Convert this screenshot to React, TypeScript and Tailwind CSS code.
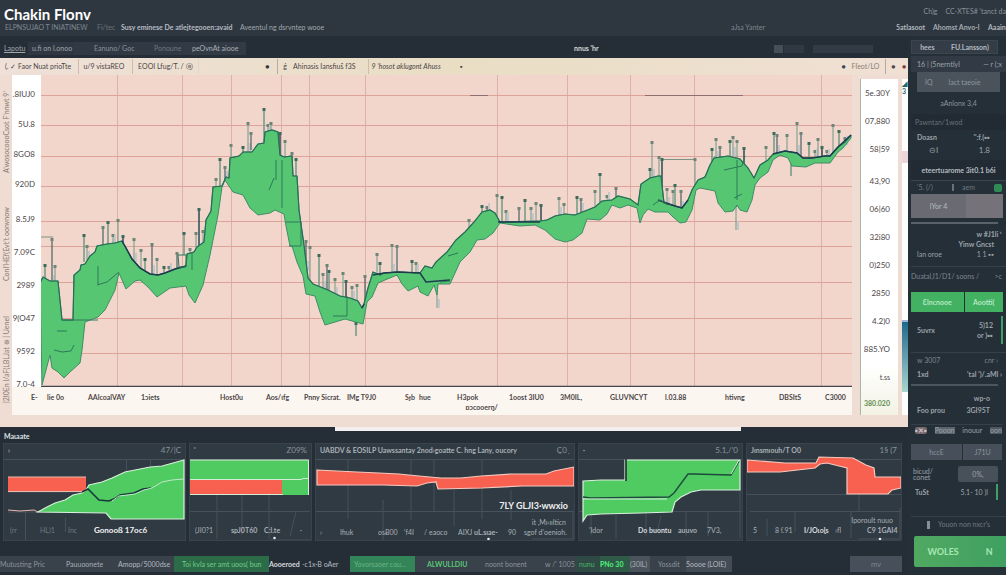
import { Fragment, ReactNode } from 'react';
import { clsx } from 'clsx';

interface Slot {
    at: number;
    w: number;
    text?: ReactNode;
    as?: 'a' | 'button' | 'span';
    className?: string;
}

// Row of items spread proportionally over the width, `from`..`to` is the scale
function Track({ items, from = 0, to, className }: { items: Slot[]; from?: number; to: number; className?: string }) {
    const last = items[items.length - 1];
    return (
        <div className={clsx('flex whitespace-nowrap', className)}>
            {items.map((item, i) => {
                const prev = i === 0 ? from : items[i - 1].at + items[i - 1].w;
                const Tag = item.as ?? 'span';
                return (
                    <Fragment key={i}>
                        <span className="min-w-0" style={{ flex: `${item.at - prev} 0 0px` }} />
                        <Tag
                            {...(Tag === 'a' ? { href: '#' } : {})}
                            className={clsx('flex min-w-0 items-center', item.className)}
                            style={{ flex: `${item.w} 0 0px` }}
                        >
                            {item.text}
                        </Tag>
                    </Fragment>
                );
            })}
            <span className="min-w-0" style={{ flex: `${to - last.at - last.w} 0 0px` }} />
        </div>
    );
}

const headerLinks: Slot[] = [
    { at: 5, w: 84, text: 'ELPNSUJAO T INIATINEW', className: 'text-[#7f8890]' },
    { at: 97, w: 14, text: 'Fi/tec', as: 'a', className: 'text-[#6b747d]' },
    { at: 121, w: 104, text: 'Susy eminese De atlejtegooen:avaid', as: 'a', className: 'font-bold text-[#b4bac0]' },
    { at: 240, w: 76, text: 'Aveentul ng dsrvntep wooe', as: 'a', className: 'text-[#a0a7ad]' },
    { at: 731, w: 30, text: 'aJsa Yanter', as: 'a', className: 'text-[#7d858d]' },
    { at: 896, w: 28, text: '5atlasoot', as: 'a', className: 'font-bold text-[#b4bac0]' },
    { at: 933, w: 40, text: 'Ahomst Anvo-l', as: 'a', className: 'font-bold text-[#a4abb1]' },
    { at: 988, w: 18, text: 'Aaain', as: 'a', className: 'font-bold text-[#b4bac0]' },
];

const navItems: Slot[] = [
    { at: 4, w: 18, text: 'Lapotu', as: 'a', className: 'text-[#a0a7ad] underline' },
    { at: 28, w: 46, text: 'u.fi on l.onoo', as: 'button', className: 'indent-1 bg-[#2f3842] text-[#a0a7ad]' },
    { at: 74, w: 68, text: 'Eanuno/ Goc', as: 'button', className: 'indent-5 bg-[#303944] text-[#8b939b]' },
    { at: 142, w: 42, text: 'Ponoune', as: 'button', className: 'indent-3 bg-[#303944] text-[#6f7880]' },
    { at: 184, w: 62, text: 'peOvnAt aiooe', as: 'button', className: 'indent-2 bg-[#323b45] text-[#a8afb5]' },
    { at: 574, w: 20, text: "nnus 'hr", className: 'font-bold text-[#d5d9dc]' },
    { at: 774, w: 9, className: 'h-2 self-center bg-[#464f59]' },
    { at: 784, w: 20, className: 'h-2 self-center bg-[#303943]' },
    { at: 813, w: 60, className: 'h-2 self-center bg-[#323b45]' },
];

const toolItems: Slot[] = [
    { at: 5, w: 74, text: '(. ✓ Faor Nuat prioTte', as: 'button', className: 'border-r border-[#cdbcae]' },
    { at: 83, w: 49, text: 'u/9 vistaREO', as: 'button', className: 'border-r border-[#cdbcae]' },
    { at: 137, w: 60, text: 'EOOI Lfug/T. /  ⓔ', as: 'button', className: 'border-r border-[#e3d6c8]' },
    { at: 264, w: 12, text: '●', className: 'border-r border-[#b9aaa0] text-[#33343b]' },
    { at: 281, w: 8, text: 'ǵ' },
    { at: 291, w: 75, text: 'Ahinasis Iansfiuš f3S', as: 'button', className: 'border-r border-[#cdbcae]' },
    { at: 369, w: 68, text: '9 ’hosot aklugont Ahuss', as: 'button', className: 'italic' },
    { at: 458, w: 5, text: '▪' },
    { at: 842, w: 5, text: '●', className: 'text-[#33445a]' },
    { at: 852, w: 34, text: 'Fſeot/LO', as: 'button', className: 'border-r border-[#b9aaa0] text-[#8a7f78]' },
    { at: 891, w: 6, text: '●' },
    { at: 902, w: 5, text: '●', className: 'text-[#7a3b46]' },
];

const leftAxisTop = ['.8IUJ0', '5U.8', '8GO8', '920D'];
const leftAxisBottom = ['8.5J9', '7.09C', '2989', '9(O47', '9592', '7.0-4'];
const priceTop = ['5e.30Y', '07,880', '58|59'];
const priceBottom = ['43,90', '06|60', '32i80', '0)250', '2850', '4.2)0', '885.YO'];

const timeAxis: Slot[] = [
    { at: 31, w: 12, text: 'E-' },
    { at: 47, w: 17, text: 'lie 0o' },
    { at: 88, w: 38, text: 'AAlcoalVAY' },
    { at: 141, w: 18, text: '1ɔiets' },
    { at: 220, w: 19, text: 'Host0u' },
    { at: 266, w: 20, text: 'Aos/ıfg' },
    { at: 304, w: 34, text: 'Pnny Sicrat.' },
    { at: 347, w: 32, text: 'IMg T9J0' },
    { at: 405, w: 12, text: 'Sɟb' },
    { at: 419, w: 12, text: 'hue' },
    { at: 457, w: 18, text: 'H3pok' },
    { at: 509, w: 32, text: '1oost 3IU0' },
    { at: 560, w: 18, text: '3M0IL,' },
    { at: 610, w: 32, text: 'GLUVNCYT' },
    { at: 665, w: 20, text: 'l.03.88' },
    { at: 725, w: 18, text: 'htivng' },
    { at: 779, w: 20, text: 'DBSItS' },
    { at: 825, w: 18, text: 'C3000' },
];

const statusItems: Slot[] = [
    { at: 0, w: 54, text: 'Mutusting Pric', as: 'button', className: 'bg-[#39414b] text-[#8b939b]' },
    { at: 54, w: 56, text: 'Pauuoonete', as: 'button', className: 'indent-3 bg-[#39414b] text-[#a8afb5]' },
    { at: 110, w: 64, text: 'Amopp/5000dse', as: 'button', className: 'indent-2 bg-[#39414b] text-[#b4bac0]' },
    { at: 174, w: 95, text: 'Toi kvla ser amt uoos( bun', as: 'button', className: 'indent-2 bg-[#2c6b48] text-[#6fce85]' },
    { at: 269, w: 28, text: 'Aooeroed', as: 'button', className: 'font-bold text-[#d5d9dc]' },
    { at: 302, w: 48, text: '-c1x·B oAer', as: 'button', className: 'text-[#b4bac0]' },
    { at: 350, w: 65, text: 'Yovorsaoer cou...', as: 'button', className: 'indent-1 bg-[#34845a] text-[#6bb583]' },
    { at: 415, w: 62, text: 'ALWULLDIU', as: 'button', className: 'indent-3 bg-[#39414b] font-bold text-[#57c777]' },
    { at: 477, w: 60, text: 'noont bonent', as: 'button', className: 'indent-2 bg-[#39414b] text-[#8b939b]' },
    { at: 537, w: 38, text: "w /' 1005", as: 'button', className: 'indent-2 bg-[#39414b] text-[#8b939b]' },
    { at: 575, w: 25, text: 'nunu', as: 'button', className: 'indent-1 bg-[#2f4a44] text-[#4cb56c]' },
    { at: 600, w: 30, text: 'PNo 30', as: 'button', className: 'bg-[#2f5a48] font-bold text-[#4ff07c]' },
    { at: 630, w: 20, text: '(30lL)', as: 'button', className: 'bg-[#4a525b] text-[#a8afb5]' },
    { at: 650, w: 36, text: 'Yossdit', as: 'button', className: 'indent-2 bg-[#39414b] text-[#8b939b]' },
    { at: 686, w: 46, text: '5oooe (LOIE)', as: 'button', className: 'bg-[#434b55] text-[#b4bac0]' },
    { at: 850, w: 52, text: 'rnv', as: 'button', className: 'justify-center bg-[#47505a] text-[#7f8890]' },
];

// [x, top, bottom] of the thin wicks around the band
const wicks = [
    [45, 264, 284], [52, 238, 284], [55, 265, 283], [84, 234, 262], [87, 245, 260], [103, 226, 248], [108, 221, 246],
    [113, 234, 244], [118, 219, 243], [123, 235, 243], [134, 238, 262], [141, 249, 268], [145, 258, 272], [152, 243, 274],
    [157, 258, 275], [164, 266, 274], [169, 266, 272], [177, 252, 269], [184, 232, 255], [190, 248, 270], [196, 232, 252],
    [199, 208, 248], [203, 230, 244], [216, 178, 188], [220, 158, 186], [225, 166, 180], [231, 144, 160], [243, 146, 153],
    [248, 122, 152], [251, 132, 150], [264, 108, 142], [268, 124, 132], [271, 122, 132], [280, 132, 157], [285, 140, 200],
    [292, 152, 160], [296, 158, 178], [306, 240, 270], [310, 246, 284], [319, 254, 290], [323, 273, 290], [327, 264, 292],
    [329, 270, 292], [335, 278, 296], [343, 272, 298], [346, 280, 298], [352, 286, 300], [357, 284, 302], [356, 322, 336],
    [365, 275, 300], [377, 253, 276], [380, 262, 278], [392, 244, 273], [397, 245, 276], [412, 260, 273], [416, 262, 273],
    [427, 268, 282], [431, 268, 284], [437, 262, 308], [469, 219, 230], [482, 205, 214], [487, 206, 212], [497, 194, 222],
    [502, 196, 221], [506, 210, 221], [519, 207, 221], [525, 199, 221], [531, 207, 222], [536, 202, 221], [541, 204, 221],
    [559, 197, 216], [564, 203, 214], [577, 196, 214], [581, 198, 212], [595, 190, 206], [600, 173, 202], [607, 195, 201],
    [616, 187, 200], [650, 168, 180], [652, 141, 178], [659, 156, 177], [662, 158, 200], [667, 188, 206], [673, 190, 206],
    [675, 184, 206], [681, 190, 210], [695, 158, 186], [712, 148, 165], [716, 138, 160], [720, 146, 158], [730, 140, 158],
    [733, 136, 156], [737, 140, 160], [744, 147, 166], [736, 204, 230], [766, 146, 164], [774, 132, 158], [777, 134, 154],
    [787, 134, 152], [791, 158, 176], [797, 122, 154], [801, 132, 156], [809, 142, 158], [815, 150, 158], [818, 138, 158],
    [822, 146, 158], [827, 150, 158], [833, 124, 154], [839, 130, 150], [845, 137, 145],
];

const upper =
    '40,283 43,277 50,281 58,281 61,310 62,320 73,320 74,275 80,270 81,265 85,264 90,256 95,252 97,246 107,244 115,243 122,241 126,248 132,259 140,268 150,274 158,275 165,273 175,269 186,266 187,254 194,252 197,247 204,242 206,220 211,211 213,187 222,186 226,177 229,178 230,158 239,156 243,152 252,152 258,144 264,143 265,132 272,130 278,132 280,155 284,157 292,156 293,176 297,176 299,210 304,245 308,278 313,284 318,286 328,290 340,296 350,298 358,301 362,308 364,304 368,288 373,272 380,275 384,273 398,272 420,273 425,266 432,268 436,262 447,252 456,240 465,232 474,222 482,212 490,210 495,213 500,222 540,221 547,220 555,216 565,214 575,215 585,211 595,207 602,201 612,200 618,196 630,199 638,205 641,184 650,178 658,176 661,176 664,203 675,206 682,208 688,200 692,190 698,180 705,177 710,165 714,158 728,156 740,159 748,168 754,178 760,165 768,160 773,154 785,151 797,153 803,158 812,158 825,156 830,156 838,147 845,142 851,135';
const lower =
    '851,138 843,148 838,152 830,163 815,163 806,167 792,166 788,158 780,155 773,160 768,172 760,178 755,185 752,200 747,212 740,210 737,205 733,211 725,212 718,203 715,191 700,188 696,190 692,210 686,222 680,223 673,217 668,212 655,212 648,209 643,215 640,223 637,208 628,205 620,208 612,205 607,214 600,220 587,219 582,233 573,240 565,242 555,239 545,230 535,225 520,226 500,223 493,233 485,239 477,240 470,252 460,262 450,284 438,284 437,295 434,285 428,296 420,292 418,286 408,291 402,284 397,275 385,280 378,283 372,297 367,302 363,324 345,319 325,325 320,312 315,296 306,294 303,276 297,262 292,246 290,246 286,226 284,214 275,210 270,213 258,215 250,208 243,195 233,192 225,180 222,187 218,215 210,255 203,285 195,303 189,295 186,286 170,288 157,297 148,287 140,280 135,281 126,289 119,273 115,290 105,310 98,317 85,322 82,350 80,363 70,372 64,378 58,372 52,368 50,355 46,370 42,385';

function FlowChart() {
    return (
        <svg viewBox="41 75 811 312" preserveAspectRatio="none" className="block h-[312px] w-full bg-[#f2d5cb]" role="img" aria-label="Flow chart">
            {[117, 182, 231, 281, 309, 365, 497, 567, 630, 694, 821].map((x) => (
                <path key={x} d={`M${x}.5 75V387`} stroke="#dcb1a8" fill="none" />
            ))}
            {[95, 125, 156, 186, 221, 246, 282, 318, 353].map((y) => (
                <path key={y} d={`M41 ${y}.5H852`} stroke="#dda39b" fill="none" />
            ))}
            <path d="M470 95.5h18M645 95.5h98" stroke="#8d6f70" fill="none" />
            <path d="M663 159.5h33M41 237h12" stroke="#7d9484" fill="none" />
            {wicks.map(([x, top, bottom], i) => (
                <g key={i}>
                    <path d={`M${x} ${top}V${bottom}`} stroke={i % 4 === 1 ? '#2b4a55' : '#6f9a86'} strokeWidth={i % 3 === 0 ? 1.5 : 1} />
                    <rect x={x - 1.5} y={top} width="3" height="3" fill={i % 3 === 0 ? '#3c6b5a' : '#6d8577'} />
                    {i % 3 === 1 && <rect x={x + 1} y={bottom - 9} width="2" height="9" fill="#c3c6cb" />}
                </g>
            ))}
            <polygon points={`${upper} ${lower}`} fill="#57c673" stroke="#3c8f66" strokeLinejoin="round" />
            <polyline points={upper} fill="none" stroke="#276e58" strokeWidth="1.2" />
            <path d="M122 241l4 7 6 11 8 9 10 6 8 1 7-2 10-4 11-3M373 275l11-2 14-1 22 1 6 9 24-2M498 222h42M658 200l17 6 7 2 6-8M362 308l2-4M773 154l12-3 12 2 6 5 9 0 13-2 5 0 8-9 13-12" fill="none" stroke="#1d3d4f" strokeWidth="1.5" />
            <path d="M62 320H98M54 350l8 2 9-1 3-6M57 331h10M97 285l10-3 12-10M98 266v18M178 255h8v12h-7zM192 252v18M274 178l-5 12M282 160v48M276 160v20M286 222h15v24h-12M333 316h14v-20M724 170l18-4 3-10M737 160v40M734 198l8-4M653 205l7-5 8 5M448 256l10-3M440 282l10-1" fill="none" stroke="#2b7a58" />
            <path d="M41 386.5H852" stroke="#45454f" strokeWidth="1.5" />
        </svg>
    );
}

function Card({ view, title, value, art, children }: { view: string; title?: string; value: string; art: ReactNode; children: ReactNode }) {
    return (
        <article className="grid min-w-0 border border-[#38434d] bg-[#303a43]">
            <svg viewBox={view} preserveAspectRatio="none" className="h-24 w-full [grid-area:1/1]" aria-hidden="true">
                {art}
            </svg>
            <div className="flex min-w-0 flex-col justify-between whitespace-nowrap [grid-area:1/1]">
                <header className="flex justify-between px-1 leading-3">
                    <h3 className="font-bold text-[#a9b0b6]">{title}</h3>
                    <span className="text-[8px] text-[#8b949c]">{value}</span>
                </header>
                {children}
            </div>
        </article>
    );
}

const cardGrid = { stroke: '#46515b', fill: 'none' };

function MiniCharts() {
    return (
        <div className="grid grid-cols-[183fr_123fr_260fr_165fr_156fr] gap-[3px] pr-1.5 pl-[3px] text-[7px] text-[#a9b0b6]">
            <Card
                view="4 444 181 96"
                title="›"
                value="47/|C"
                art={
                    <>
                        <path d="M4 459.5H184M8 492H184M8 512H110M25.500 512v28M65.500 518v14M126.500 459v60M150.500 459v60" {...cardGrid} />
                        <rect x="8" y="477" width="78" height="15" fill="#f8614f" />
                        <path d="M8 477h78M8 491.500h74M8 510l12 1 14-1 4 2" fill="none" stroke="#ebb9ad" />
                        <path d="M38 512L47 507 55 503 65 500 73 495 82 493 86 490 89 485 102 482 112 478 125 472 140 469 150 467 162 466 173 463 184 460V519H111L106 513Z" fill="#50cb62" stroke="#d8f0dc" strokeWidth="1.2" />
                        <path d="M82 492l6-3 6 6 5 5 10 1 7-3 4-3 14-2 9-4 8-1" fill="none" stroke="#15383c" strokeWidth="1.6" />
                        <path d="M112 501l7-5 16-2 9-4 8-2 10-6 10-2 12-1" fill="none" stroke="#bfe8c6" />
                    </>
                }
            >
                <Track
                    className="h-5 text-[#6f7982]"
                    from={4}
                    to={185}
                    items={[
                        { at: 10, w: 14, text: '(rr' },
                        { at: 40, w: 14, text: 'HL)1' },
                        { at: 68, w: 14, text: 'Inc' },
                        { at: 94, w: 50, text: 'Gonooß 17oc6', className: 'text-[8px] font-bold text-[#f0f2f3]' },
                    ]}
                />
            </Card>
            <Card
                view="190 444 121 96"
                title="'"
                value="Z09%"
                art={
                    <>
                        <path d="M190 459.500H310M190 511.500H310M217 495v44M242 495v40M269 495v44M296 512l-6 24M270 540h40" {...cardGrid} />
                        <rect x="189" y="460" width="120" height="35" fill="#50cb62" />
                        <rect x="189" y="480" width="93" height="15" fill="#f8614f" />
                        <path d="M189 460h119.500v35M189 479.500h112l2-1h6M189 494.500h94" fill="none" stroke="#d3ecd5" />
                        <circle cx="274.500" cy="538" r="1.300" fill="#e8eaec" />
                    </>
                }
            >
                <Track
                    className="h-5"
                    from={190}
                    to={311}
                    items={[
                        { at: 195, w: 16, text: '(JI0?1' },
                        { at: 231, w: 20, text: 'spJ0T60', className: 'font-bold' },
                        { at: 264, w: 14, text: 'C:l.te', className: 'font-bold' },
                        { at: 300, w: 4, text: '·' },
                    ]}
                />
            </Card>
            <Card
                view="314 444 258 96"
                title="UABDV & EOSILP Uawssantay 2nod›goatte C. hng Lany, oucory"
                value="Ç0ˎ"
                art={
                    <>
                        <path d="M314 459.500H572M314 511.500H572M346 459v60M381 500v40M409 460v60M432 459v52M452 490v36M480 459v60M509 490v30M571 512v27H530" {...cardGrid} />
                        <path d="M315 470l20 1 20 1 22 1 20 1 20 2 22 2 20 0 20-2 30-2 20 0 15 0 8-3 20-4v19H520L480 488 436 489 434 482 425 483 415 486 381 485 315 485Z" fill="#f8614f" stroke="#f3c9bf" strokeWidth="1.2" />
                        <path d="M432 476h26" fill="none" stroke="#2b3038" strokeDasharray="4 2" />
                        <circle cx="486.500" cy="539" r="1.300" fill="#e8eaec" />
                    </>
                }
            >
                <div className="flex flex-col">
                    <p className="self-end pr-1.5 pb-1 text-[9px] leading-3 font-bold text-[#eef0f1]">7LY GLJI3·wwxio</p>
                    <p className="self-end pr-2 leading-3">it ,Mı‹ıılticn</p>
                    <Track
                        className="h-3 pb-1"
                        from={314}
                        to={572}
                        items={[
                            { at: 318, w: 6, text: '›' },
                            { at: 338, w: 14, text: 'Ifıuk' },
                            { at: 376, w: 16, text: 'osɃ00' },
                            { at: 402, w: 10, text: "'f4I" },
                            { at: 422, w: 20, text: '/ eaoco' },
                            { at: 456, w: 12, text: 'AIXJ' },
                            { at: 472, w: 20, text: 'uL.sıae-', className: 'font-bold' },
                            { at: 506, w: 8, text: '90' },
                            { at: 522, w: 40, text: 'sgof dʼoenioh.' },
                        ]}
                    />
                </div>
            </Card>
            <Card
                view="578 444 163 96"
                title="·"
                value="5.1,/'0"
                art={
                    <>
                        <path d="M578 459.500H742M578 511.500H742M590 515v20M615 515v24M645 512v24M660 516l-4 16M685 512v24M707 512v24M739 460v78" {...cardGrid} />
                        <path d="M582 481L600 480H624V460H739V490H700L690 492 680 497 674 502 671 512 640 513 600 514 586 515 582 521Z" fill="#50cb62" stroke="#d8f0dc" strokeWidth="1.200" />
                        <path d="M582 497l8 1 78-1 5-4 14-19 5-0 38 1 8-14" fill="none" stroke="#1d4a3c" strokeWidth="1.400" />
                        <path d="M582 499h84M730 474l8-14" fill="none" stroke="#d8f0dc" />
                        <path d="M625 459v22" stroke="#1b232b" strokeWidth="1.500" />
                    </>
                }
            >
                <Track
                    className="h-5"
                    from={578}
                    to={741}
                    items={[
                        { at: 588, w: 14, text: "'Idor" },
                        { at: 637, w: 34, text: 'Do buontu', className: 'font-bold text-[#d5d9dc]' },
                        { at: 677, w: 18, text: 'auuvo', className: 'font-bold' },
                        { at: 706, w: 12, text: '7V3,' },
                    ]}
                />
            </Card>
            <Card
                view="747 444 154 96"
                title="Jınsmıouh/T O0"
                value="1§ (7"
                art={
                    <>
                        <path d="M747 459.500H901M747 494.500H901M750 511.500H901M767 519v17M795 512v20M851 511v27M859 495v16M900 508v31H859" {...cardGrid} />
                        <path d="M747 460L760 461 785 463 816 463 819 457 853 458 866 465 874 468 875 477 901 477V488L892 490 888 494H847V468L835 465 827 463 820 464 815 468 780 472 747 472Z" fill="#f8614f" stroke="#f3c9bf" strokeWidth="1.200" />
                        <circle cx="880" cy="539" r="1.300" fill="#e8eaec" />
                    </>
                }
            >
                <div>
                    <p className="pr-2 text-right leading-2">Iporoult nuuo</p>
                    <Track
                        className="h-4 pb-1"
                        from={747}
                        to={901}
                        items={[
                            { at: 753, w: 6, text: '5' },
                            { at: 775, w: 14, text: '8 ſ.91' },
                            { at: 804, w: 20, text: 'I/JOɩoɭs', className: 'font-bold text-[#d5d9dc]' },
                            { at: 835, w: 10, text: '›fl' },
                            { at: 867, w: 24, text: 'C9 1GAI4', className: 'font-bold' },
                        ]}
                    />
                </div>
            </Card>
        </div>
    );
}

function Row({ left, right, className }: { left?: ReactNode; right?: ReactNode; className?: string }) {
    return (
        <div className={clsx('flex items-center justify-between whitespace-nowrap pr-4 pl-1.5', className)}>
            <span>{left}</span>
            <span>{right}</span>
        </div>
    );
}

function Sidebar() {
    return (
        <aside className="flex w-[98px] shrink-0 flex-col overflow-hidden bg-[#252f38] pl-[3px] text-[7px] leading-none text-[#9ba2a9]">
            <div className="mt-1 mr-2 flex h-3.5 justify-around border border-[#3b454e] bg-[#343d47] font-bold whitespace-nowrap text-[#b4bac0]">
                <button>hees</button>
                <button>FU.Lansson)</button>
            </div>
            <Row left="16 | (5nerntlyl" right="— r (;x" className="mt-0.5 h-4 bg-[#323b45] pr-1!" />
            <button className="mr-1.5 ml-1.5 flex h-5 items-center gap-4 bg-[#4a525b] pl-2 text-[#8f979e]">
                <span>IQ</span>
                <span>lact taeoie</span>
            </button>
            <p className="flex h-[22px] items-center justify-center text-[#8b939b]">aAnlonx 3,4</p>
            <h2 className="flex h-4 items-center bg-[#222b34] pl-1 text-[#66707a]">Pawntan/1wod</h2>
            <Row left="Doasn" right="'':f.(▪▪" className="h-3.5 font-bold" />
            <Row left={<span className="pl-3">⊝I</span>} right="1.8" className="h-3 text-[8px]" />
            <h2 className="mt-1 flex h-5 items-center justify-center bg-[#222b34] font-bold whitespace-nowrap text-[#b4bac0]">
                eteertuarome 3it0.1 b6i
            </h2>
            <div className="flex h-3.5 items-center justify-between border-t border-[#3b454e] pr-1 pl-1.5 text-[#6f7982]">
                <span>'5. (/)</span>
                <span className="border-l-2 border-[#68717a] pl-2">aem</span>
                <span className="size-2 rounded-xs bg-[#2f8a55]" />
            </div>
            <button className="mr-[3px] grid h-6 grid-cols-[3fr_2fr] bg-[#6a6b72] text-[#b9bcc0]">
                <span className="self-center">lYor 4</span>
                <span className="h-full bg-[#75727a]" />
            </button>
            <hr className="mt-1 mr-2 border-t-2 border-[#59626b]" />
            <Row right="w #J1li  ‵" className="mt-1 h-3 font-bold pr-1!" />
            <Row right="Yinw Gncst" className="h-2 font-bold pr-3!" />
            <Row left="lan oroe" right="1 1 ▪▪" className="h-3 pr-3!" />
            <h2 className="mt-1.5 flex h-5 items-center justify-between border-t border-[#36404a] pr-1 whitespace-nowrap text-[#7d868e]">
                Duatal,I1/D1/ soons / <span>&gt;c</span>
            </h2>
            <div className="mt-1.5 mr-[3px] grid h-5 grid-cols-[52fr_38fr] gap-px font-bold text-[#b5e8c2]">
                <button className="bg-[#42b162]">Ɛlncnooe</button>
                <button className="bg-[#42b162]">Aootti(</button>
            </div>
            <div className="mt-1 mr-[3px] flex h-7 items-center justify-between border-r-2 border-[#3f9f67] pr-2 pl-1.5 font-bold">
                <span>5uvrx</span>
                <span className="text-right leading-[10px]">
                    5)12
                    <br />
                    or )▪▪
                </span>
            </div>
            <Row left="w 3007" right="cnr  ›" className="mt-2 h-4 border-t border-[#36404a] text-[#7d868e] pr-2!" />
            <Row left="1xd" right="'tal ')/.aMl ›" className="h-3 font-bold pr-1!" />
            <hr className="mt-1 mr-2 border-t-2 border-[#4c555e]" />
            <Row right="wp-o" className="mt-1.5 h-3 font-bold" />
            <Row left="Foo prou" right="3GI95T" className="h-3 font-bold" />
            <div className="mt-2 mr-1 flex h-3 items-center justify-between gap-0.5 border-t border-[#36404a] pl-1 whitespace-nowrap">
                <span className="rounded-xs bg-[#75686c] font-bold text-[#cbbfc1]">▪✕▪</span>
                <span className="bg-[#5a636c]">Pooon</span>
                <span>inouur</span>
                <span className="bg-[#4f5861]">oon</span>
            </div>
            <div className="mt-2 mr-1 grid h-4 grid-cols-[50fr_38fr] gap-px text-[#8b939b]">
                <button className="bg-[#47505a]">hccE</button>
                <button className="bg-[#47505a]">J71U</button>
            </div>
            <div className="mt-1 mr-2 flex h-5 items-center justify-between pl-0.5">
                <span className="leading-[6px]">
                    bicud/
                    <br />
                    conet
                </span>
                <button className="h-4 w-10 rounded-xs bg-[#48515a]">0%,</button>
            </div>
            <div className="mr-2 flex h-4 items-center justify-between border-r-2 border-[#3f9f67] pr-2 pl-1 font-bold">
                <span>TuSt</span>
                <span className="font-normal">5.1- 10 )l</span>
            </div>
            <p className="mt-4 flex h-4 items-center justify-center gap-2 border-t border-[#36404a] whitespace-nowrap text-[#6f7982]">
                <span className="h-2 w-[3px] bg-[#87909a]" />
                Youon non nxcr's
            </p>
            <button className="mt-1 ml-[3px] flex h-[31px] items-center justify-around rounded-l-xs bg-linear-to-r from-[#50a961] to-[#3fa061] text-[9px] font-bold text-[#a7e8b4]">
                <span>WOLES</span>
                <span>N</span>
            </button>
        </aside>
    );
}

export default function App() {
    return (
        <div className="flex min-h-screen flex-col overflow-hidden bg-[#252e37] font-[Lato,'Open_Sans',sans-serif] text-[7px]">
            <header className="bg-[#2e3740]">
                <div className="flex h-[22px] items-end justify-between pl-1">
                    <h1 className="text-[15px] leading-4 font-bold text-white">Chakin Flonv</h1>
                    <div className="flex gap-2 self-center whitespace-nowrap text-[#8b939b]">
                        <span>Ch)g</span>
                        <span>CC-XTES# ‘tanct da</span>
                    </div>
                </div>
                <Track className="h-3.5 items-start leading-[10px]" items={headerLinks} to={1006} />
            </header>

            <div className="flex flex-1">
                <main className="flex min-w-0 flex-1 flex-col">
                    <Track className="h-[22px] pt-1.5 pb-[3px]" items={navItems} to={908} />

                    <section className="bg-[#efdcd3] pb-3 text-[#4c4647]">
                        <Track className="h-[17px] bg-linear-to-r from-[#efe0d8] via-[#e9dec4] to-[#f0e0d4] py-px" items={toolItems} to={908} />
                        <div className="flex">
                            <div className="flex w-3 shrink-0 rotate-180 flex-row-reverse items-center justify-between pt-3 pb-4 leading-3 whitespace-nowrap text-[#857b76] [writing-mode:vertical-rl]">
                                <span>A’wosocoooCsot F’nnwt 9’</span>
                                <span>Conl’HEf(Evt’t oonvnow</span>
                                <span>|2I0En l/aF(LBLJat ⊕ | Uenel</span>
                            </div>
                            <div className="grid min-w-0 flex-1 grid-cols-[29px_1fr] grid-rows-[312px_28px]">
                                <div className="flex flex-col bg-white pt-1 pr-1.5 text-right text-[8px]">
                                    {leftAxisTop.map((label) => (
                                        <span key={label} className="h-[30px] leading-[30px]">{label}</span>
                                    ))}
                                    <div className="flex flex-col pt-1">
                                        {leftAxisBottom.map((label) => (
                                            <span key={label} className="h-[33px] leading-[33px]">{label}</span>
                                        ))}
                                    </div>
                                </div>
                                <FlowChart />
                                <div className="col-span-2 bg-[#fcf6f1] pt-1 font-bold">
                                    <Track className="h-3" from={12} to={852} items={timeAxis} />
                                    <p className="pl-[54%] leading-2">ɒɔcooerŋ/</p>
                                </div>
                            </div>
                            <div className="mt-1 mr-1 ml-2 flex w-[38px] shrink-0 flex-col border-l border-[#a9b5a8] bg-linear-to-b from-white from-85% to-[#f3f2e4] pr-2 text-right text-[8px]">
                                {priceTop.map((label) => (
                                    <span key={label} className="h-7 leading-7">{label}</span>
                                ))}
                                <div className="flex flex-col pt-1">
                                    {priceBottom.map((label) => (
                                        <span key={label} className="h-7 leading-7">{label}</span>
                                    ))}
                                    <span className="h-7 text-[7px] leading-7">t.ss</span>
                                    <span className="h-6 text-[7px] leading-6 font-bold text-[#5f8f52]">380.020</span>
                                </div>
                            </div>
                            <div className="mt-1 flex w-1.5 shrink-0 flex-col bg-white">
                                <span className="leading-2 font-bold text-[#1f6b6b]">
                                    ◢<br />3
                                </span>
                                <span className="mt-14 h-3 bg-[#ecd5d9]" />
                                <span className="mt-[157px] h-[72px] border-t-2 border-[#9fb5d6] bg-linear-to-b from-[#176b8e] to-[#a9d6cf]" />
                            </div>
                        </div>
                    </section>

                    <section className="flex-1">
                        <div className="grid grid-cols-[335fr_406fr_167fr]">
                            <h2 className="h-4 pt-1 pl-1 leading-[10px] font-bold text-[#dfe2e4]">Maɩaate</h2>
                            <span className="h-1 bg-[#f3efef]" />
                        </div>
                        <MiniCharts />
                    </section>
                    <footer className="pb-[3px]">
                        <Track className="h-4" items={statusItems} to={908} />
                    </footer>
                </main>
                <Sidebar />
            </div>
        </div>
    );
}
